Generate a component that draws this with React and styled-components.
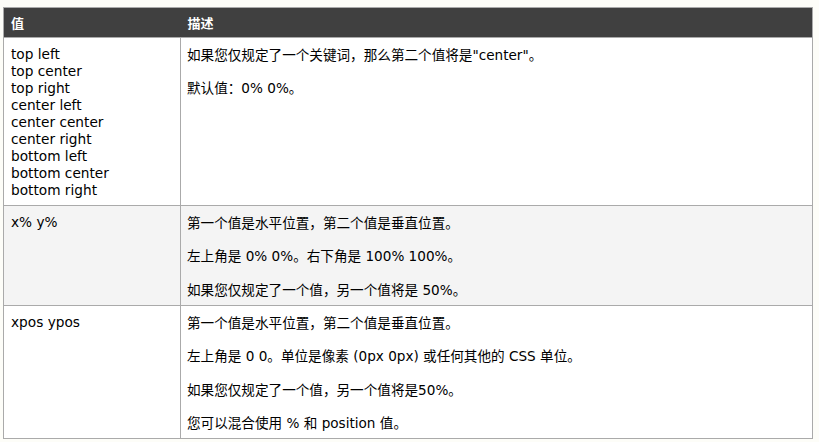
import React from "react";
import styled, { createGlobalStyle } from "styled-components";

const GlobalStyle = createGlobalStyle`
  body {
    margin: 0;
    background: #fdfdf8;
    font-family: "DejaVu Sans", Verdana, "Noto Sans CJK SC", sans-serif;
    color: #000;
  }
`;

const Page = styled.div`
  padding: 7px 6px 0 3px;
`;

const Table = styled.table`
  width: 810px;
  border-collapse: collapse;
  border: 1px solid #aaa;
  background: #fff;
`;

const HeadCell = styled.th`
  height: 29px;
  padding: 0 7px;
  background: #404040;
  color: #fff;
  font-size: 13px;
  font-weight: bold;
  text-align: left;
  font-family: "Noto Sans CJK SC", sans-serif;
`;

const Row = styled.tr`
  background: ${(p) => (p.$alt ? "#f4f4f4" : "#fff")};
`;

const ValueCell = styled.td`
  width: 162px;
  padding: 8px 7px 6px 7px;
  vertical-align: top;
  border: 1px solid #aaa;
  font-size: 13.7px;
  line-height: 17px;
`;

const DescCell = styled.td`
  padding: 8px 6px 6px 6px;
  vertical-align: top;
  border: 1px solid #aaa;
  font-size: 13.6px;
  line-height: 18px;
`;

const Para = styled.p`
  margin: 0 0 15.4px;
  &:last-child {
    margin-bottom: 0;
  }
`;

const rows = [
  {
    values: [
      "top left",
      "top center",
      "top right",
      "center left",
      "center center",
      "center right",
      "bottom left",
      "bottom center",
      "bottom right",
    ],
    desc: ["如果您仅规定了一个关键词，那么第二个值将是\"center\"。", "默认值：0% 0%。"],
  },
  {
    values: ["x% y%"],
    desc: [
      "第一个值是水平位置，第二个值是垂直位置。",
      "左上角是 0% 0%。右下角是 100% 100%。",
      "如果您仅规定了一个值，另一个值将是 50%。",
    ],
    alt: true,
  },
  {
    values: ["xpos ypos"],
    desc: [
      "第一个值是水平位置，第二个值是垂直位置。",
      "左上角是 0 0。单位是像素 (0px 0px) 或任何其他的 CSS 单位。",
      "如果您仅规定了一个值，另一个值将是50%。",
      "您可以混合使用 % 和 position 值。",
    ],
  },
];

export default function App() {
  return (
    <Page>
      <GlobalStyle />
      <Table>
        <thead>
          <tr>
            <HeadCell>值</HeadCell>
            <HeadCell>描述</HeadCell>
          </tr>
        </thead>
        <tbody>
          {rows.map((row, i) => (
            <Row key={i} $alt={row.alt}>
              <ValueCell>
                {row.values.map((v) => (
                  <div key={v}>{v}</div>
                ))}
              </ValueCell>
              <DescCell>
                {row.desc.map((d) => (
                  <Para key={d}>{d}</Para>
                ))}
              </DescCell>
            </Row>
          ))}
        </tbody>
      </Table>
    </Page>
  );
}
